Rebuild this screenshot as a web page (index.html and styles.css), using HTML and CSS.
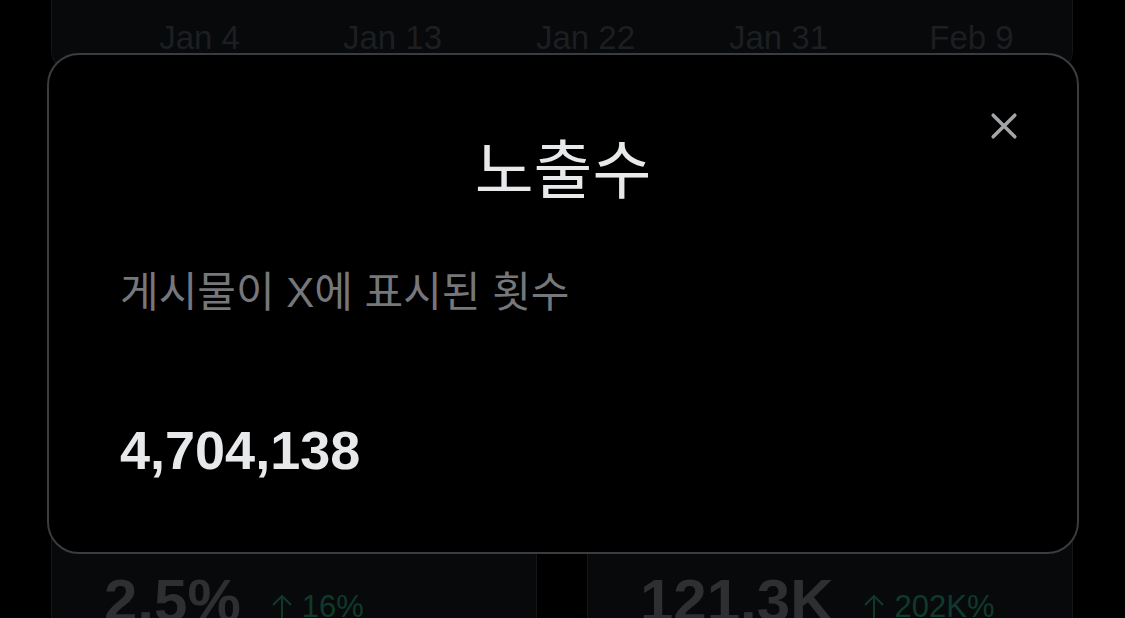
FILE: index.html
```html
<!DOCTYPE html>
<html lang="ko">
<head>
    <meta charset="UTF-8">
    <title>노출수</title>
    <link rel="stylesheet" href="styles.css">
</head>
<body>
    <div class="dash">
        <div class="chart-card">
            <div class="axis">
                <span>Jan 4</span>
                <span>Jan 13</span>
                <span>Jan 22</span>
                <span>Jan 31</span>
                <span>Feb 9</span>
            </div>
        </div>
        <div class="stats">
            <div class="stat">
                <span class="stat-value">2.5%</span>
                <span class="stat-delta">
                    <svg class="arrow" viewBox="0 0 22 30" width="22" height="30"><path d="M11 30V2M2 11l9-9 9 9" stroke="currentColor" stroke-width="2" fill="none"/></svg>16%
                </span>
            </div>
            <div class="stat">
                <span class="stat-value">121.3K</span>
                <span class="stat-delta">
                    <svg class="arrow" viewBox="0 0 22 30" width="22" height="30"><path d="M11 30V2M2 11l9-9 9 9" stroke="currentColor" stroke-width="2" fill="none"/></svg>202K%
                </span>
            </div>
        </div>
    </div>

    <div class="modal">
        <button class="close-btn" aria-label="닫기">
            <svg viewBox="0 0 24 24" width="40" height="40">
                <path d="M5.5 5.5l13 13M18.5 5.5l-13 13" stroke="currentColor" stroke-width="2.1" stroke-linecap="round" fill="none"/>
            </svg>
        </button>
        <h2 class="modal-title">노출수</h2>
        <p class="modal-desc">게시물이 X에 표시된 횟수</p>
        <div class="modal-number">4,704,138</div>
    </div>
</body>
</html>
```

FILE: styles.css
```css
html, body {
    margin: 0;
    height: 618px;
    overflow: hidden;
    background: #000;
    font-family: "Liberation Sans", "Noto Sans CJK KR", sans-serif;
}

.dash {
    padding: 0 52px 0 51px;
}

.chart-card {
    height: 70px;
    background: #08090b;
    border: 1px solid #141518;
    border-top: none;
    border-radius: 0 0 20px 20px;
}

.axis {
    display: grid;
    grid-template-columns: repeat(5, 193px);
    padding: 18px 0 0 51px;
    color: #1d1e21;
    font-size: 33px;
    line-height: 40px;
    text-align: center;
}

.stats {
    display: flex;
    gap: 50px;
    margin-top: 14px;
}

.stat {
    flex: 1;
    height: 560px;
    background: #08090b;
    border: 1px solid #141518;
    border-radius: 20px;
    padding: 485px 0 0 52px;
    box-sizing: border-box;
    display: flex;
    align-items: flex-start;
    gap: 30px;
}

.stat-value {
    color: #2e2f31;
    font-size: 60px;
    line-height: 59px;
    font-weight: bold;
}

.stat-delta {
    display: flex;
    align-items: flex-start;
    gap: 9px;
    color: #0f3a2b;
    font-size: 31px;
    line-height: 31px;
    margin-top: 20px;
}

.arrow {
    display: block;
    margin-top: 3px;
}

.modal {
    position: absolute;
    left: 47px;
    top: 53px;
    width: 1032px;
    height: 501px;
    box-sizing: border-box;
    background: #000;
    border: 2px solid #3a3c40;
    border-radius: 32px;
    padding: 0 71px;
}

.close-btn {
    position: absolute;
    right: 53px;
    top: 51px;
    background: none;
    border: none;
    padding: 0;
    color: #a3a6a9;
    cursor: pointer;
}

.close-btn svg {
    display: block;
}

.modal-title {
    margin: 76px 0 0;
    text-align: center;
    color: #e7e9ea;
    font-size: 64px;
    font-weight: 400;
    line-height: 80px;
}

.modal-desc {
    margin: 57px 0 0;
    color: #75777a;
    font-size: 42px;
    line-height: 50px;
}

.modal-number {
    margin-top: 102px;
    color: #e7e9ea;
    font-size: 54px;
    font-weight: bold;
    line-height: 60px;
}
```
